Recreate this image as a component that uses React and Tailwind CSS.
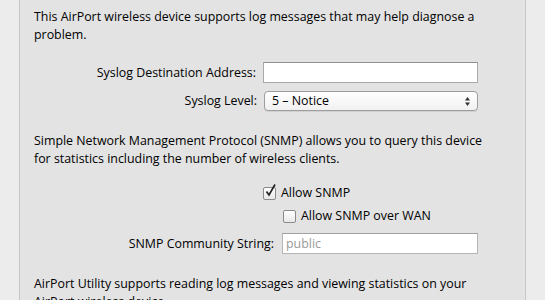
export default function App() {
  const font = { fontFamily: '"Lucida Grande", "Open Sans", "DejaVu Sans", sans-serif' };
  return (
    <div className="w-[545px] h-[300px] overflow-hidden bg-[#ececec] text-black" style={font}>
      <div className="ml-[19px] w-[507px] h-full border-x border-[#c6c6c6] bg-[#e3e3e3] pl-[14px] pr-4 text-[12.4px] leading-[18px]">
        <p className="pt-[8px] w-[456px]">
          This AirPort wireless device supports log messages that may help diagnose a problem.
        </p>

        <div className="mt-[18px] flex items-center">
          <label className="w-[229px] text-right pr-[7px]">Syslog Destination Address:</label>
          <input
            type="text"
            className="w-[215px] h-[21px] bg-white border border-[#a9a9a9] border-t-[#8f8f8f] outline-none"
          />
        </div>

        <div className="mt-[8px] flex items-center">
          <label className="w-[230px] text-right pr-[7px]">Syslog Level:</label>
          <div className="w-[214px] h-[20px] flex items-center justify-between rounded-[4px] border border-[#9d9d9d] bg-gradient-to-b from-white to-[#f1f1f1] pl-[7px] pr-[6px] shadow-[0_1px_0_rgba(0,0,0,0.08)]">
            <span>5 – Notice</span>
            <svg width="7" height="11" viewBox="0 0 7 11">
              <path d="M3.5 1 L6 4.5 H1 Z" fill="#333" />
              <path d="M3.5 10 L6 6.5 H1 Z" fill="#333" />
            </svg>
          </div>
        </div>

        <p className="mt-[21px] w-[456px]">
          Simple Network Management Protocol (SNMP) allows you to query this device for statistics including the number of wireless clients.
        </p>

        <div className="mt-[16px] flex items-center pl-[229px]">
          <span className="w-[13px] h-[13px] flex items-center justify-center rounded-[2px] border border-[#8a8a8a] bg-gradient-to-b from-white to-[#e8e8e8]">
            <svg width="13" height="14" viewBox="0 0 13 14" className="-mt-[4px] ml-[1px] overflow-visible">
              <path d="M2.5 7.5 L5 11 L11 0.5" fill="none" stroke="#222" strokeWidth="1.7" />
            </svg>
          </span>
          <span className="ml-[5px]">Allow SNMP</span>
        </div>

        <div className="mt-[5px] flex items-center pl-[249px]">
          <span className="w-[13px] h-[13px] rounded-[2px] border border-[#8a8a8a] bg-gradient-to-b from-white to-[#e8e8e8]" />
          <span className="ml-[5px]">Allow SNMP over WAN</span>
        </div>

        <div className="mt-[8px] flex items-center">
          <label className="w-[248px] text-right pr-[8px]">SNMP Community String:</label>
          <input
            type="text"
            defaultValue="public"
            className="w-[196px] h-[21px] bg-white border border-[#b5b5b5] border-t-[#a0a0a0] pl-[3px] text-[#9a9a9a] outline-none"
          />
        </div>

        <p className="mt-[21px] w-[456px]">
          AirPort Utility supports reading log messages and viewing statistics on your AirPort wireless device.
        </p>
      </div>
    </div>
  );
}
